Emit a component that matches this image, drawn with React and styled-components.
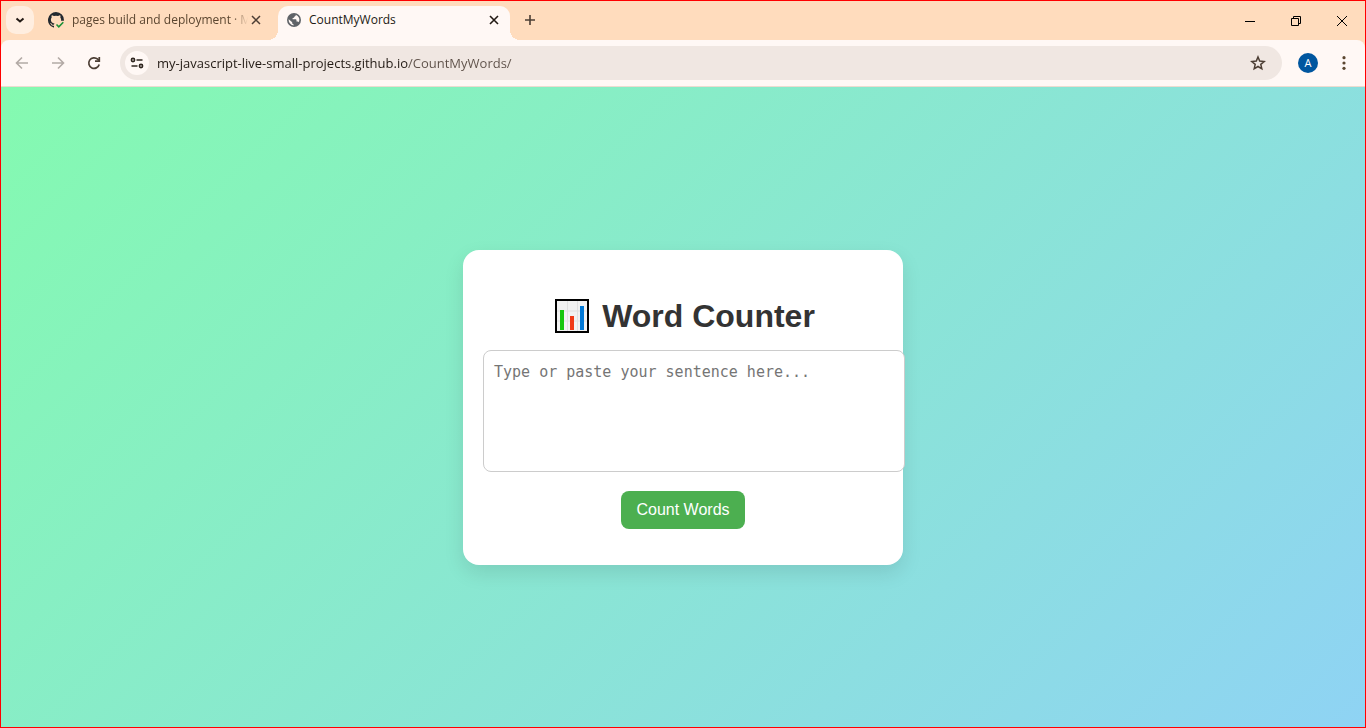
import React, { useState } from "react";
import styled, { createGlobalStyle } from "styled-components";

const GlobalStyle = createGlobalStyle`
  * { box-sizing: border-box; }
  body { margin: 0; font-family: "Open Sans", "Noto Sans", sans-serif; }
  button, input, textarea { font: inherit; margin: 0; }
  button { border: 0; padding: 0; background: none; }
  svg { display: block; flex: none; }
`;

const Window = styled.div`
  min-height: 100vh;
  display: flex;
  flex-direction: column;
  border: 1px solid #ff0000;
  background: #ffdcbd;
`;

const TabStrip = styled.header`
  height: 39px;
  display: flex;
  align-items: flex-end;
  padding-left: 5px;
`;

const TabSearch = styled.button`
  width: 28px;
  height: 28px;
  margin-bottom: 6px;
  border-radius: 10px;
  background: #ffeee0;
  display: grid;
  place-items: center;
`;

const Tab = styled.div`
  position: relative;
  width: ${(p) => (p.$active ? 232 : 244)}px;
  height: 34px;
  padding: ${(p) => (p.$active ? "0 8px 6px 9px" : "0 14px 6px")};
  display: flex;
  align-items: center;
  gap: 8px;
  font-size: 12px;
  line-height: 16px;
  color: ${(p) => (p.$active ? "#221a14" : "#5b4630")};
  background: ${(p) => (p.$active ? "#fff8f5" : "transparent")};
  border-radius: 10px 10px 0 0;

  &::before,
  &::after {
    content: "";
    display: ${(p) => (p.$active ? "block" : "none")};
    position: absolute;
    bottom: 0;
    width: 10px;
    height: 10px;
  }
  &::before {
    left: -10px;
    background: radial-gradient(circle at 0 0, transparent 10px, #fff8f5 10px);
  }
  &::after {
    right: -10px;
    background: radial-gradient(circle at 100% 0, transparent 10px, #fff8f5 10px);
  }
`;

const TabTitle = styled.span`
  flex: 1;
  min-width: 0;
  margin-right: ${(p) => (p.$fade ? "-8px" : "0")};
  overflow: hidden;
  white-space: nowrap;
  mask-image: ${(p) =>
    p.$fade ? "linear-gradient(to left, transparent, #000 16px)" : "none"};
`;

const IconButton = styled.button`
  width: ${(p) => p.$size || 16}px;
  height: ${(p) => p.$size || 16}px;
  display: grid;
  place-items: center;
  flex: none;
  border-radius: 50%;
`;

const NewTab = styled(IconButton)`
  margin: 0 0 6px 6px;
`;

const WindowControls = styled.div`
  margin-left: auto;
  align-self: stretch;
  display: flex;
`;

const WindowControl = styled.button`
  width: 46px;
  display: grid;
  place-items: center;
`;

const Toolbar = styled.nav`
  height: 47px;
  padding: 0 7px;
  display: flex;
  align-items: center;
  gap: 8px;
  background: #fff8f5;
  border-radius: 8px 8px 0 0;
  border-bottom: 1px solid #ecdcd0;
`;

const AddressBar = styled.div`
  flex: 1;
  height: 34px;
  margin-left: 4px;
  padding: 0 10px 0 5px;
  border-radius: 17px;
  background: #f0e7e2;
  display: flex;
  align-items: center;
  gap: 8px;
`;

const SiteInfo = styled(IconButton)`
  background: #fff8f5;
`;

const AddressInput = styled.input`
  flex: 1;
  min-width: 0;
  height: 24px;
  padding: 0;
  border: 0;
  outline: 0;
  font-size: 13px;
  color: transparent;
  caret-color: #221a14;
  background: linear-gradient(to right, #221a14 251px, #5d5048 251px);
  background-clip: text;
`;

const Avatar = styled.button`
  width: 20px;
  height: 20px;
  margin: 0 4px 0 8px;
  border-radius: 50%;
  background: #00569f;
  color: #fff;
  font-size: 11px;
  line-height: 20px;
  text-align: center;
`;

const Page = styled.main`
  flex: 1;
  display: flex;
  align-items: center;
  justify-content: center;
  background: linear-gradient(135deg, #84fab0, #8fd3f4);
  font-family: "Liberation Sans", Arial, sans-serif;
`;

const Card = styled.section`
  width: 440px;
  padding: 47px 20px 36px;
  border-radius: 16px;
  background: #fff;
  box-shadow: 0 8px 20px rgba(0, 0, 0, 0.1);
  display: flex;
  flex-direction: column;
  align-items: center;
`;

const Title = styled.h1`
  margin: 0 0 15px;
  padding-left: 4px;
  display: flex;
  align-items: center;
  gap: 13px;
  font-size: 32px;
  line-height: 38px;
  color: #333;
`;

const WordsInput = styled.textarea`
  align-self: flex-start;
  width: calc(100% + 22px);
  height: 122px;
  flex: none;
  padding: 10px;
  border: 1px solid #ccc;
  border-radius: 8px;
  resize: none;
  background: #fff;
  font-family: "DejaVu Sans Mono", monospace;
  font-size: 15px;
  line-height: 22px;

  &::placeholder {
    color: #757575;
  }
`;

const CountButton = styled.button`
  margin-top: 19px;
  padding: 10px 15px;
  border-radius: 8px;
  background: #4caf50;
  color: #fff;
  font-size: 16px;
  line-height: 18px;
`;

const Result = styled.output`
  margin-top: 12px;
  font-size: 18px;
  color: #333;

  &:empty {
    display: none;
  }
`;

const Stroke = ({ size = 16, color = "#4c3e34", width = 2, d }) => (
  <svg width={size} height={size} viewBox={`0 0 ${size} ${size}`} fill="none" stroke={color} strokeWidth={width} aria-hidden="true">
    <path d={d} />
  </svg>
);

const GithubIcon = () => (
  <svg width="16" height="16" viewBox="0 0 16 16" aria-hidden="true">
    <path
      fill="#24292f"
      d="M8 0a8 8 0 0 0-2.5 15.6c.4.1.5-.2.5-.4v-1.5c-2.2.5-2.7-.9-2.7-.9-.4-.9-.9-1.2-.9-1.2-.7-.5.1-.5.1-.5.8.1 1.2.8 1.2.8.7 1.300 1.900.9 2.300.7.1-.5.3-.9.5-1.100C4.700 11.300 2.900 10.600 2.900 7.600c0-.9.3-1.600.8-2.200-.1-.2-.4-1 .1-2.100 0 0 .7-.2 2.200.8a7.600 7.600 0 0 1 4 0c1.500-1 2.200-.8 2.200-.8.5 1.100.2 1.900.1 2.100.5.600.8 1.300.8 2.200l-.1 1.100h2.900A8 8 0 0 0 8 0Z"
    />
    <path d="m8.500 12.500 2.300 2.300 4.500-4.500" fill="none" stroke="#1a9137" strokeWidth="1.600" />
  </svg>
);

const GlobeIcon = () => (
  <svg width="14" height="14" viewBox="0 0 14 14" aria-hidden="true">
    <circle cx="7" cy="7" r="7" fill="#5f6368" />
    <path
      fill="#fff8f5"
      d="M8.700 1.700c.2 1-.2 1.500-1.100 1.700L6.900 4.700 5.600 5v1.200h2.700c.8 0 1.200.5 1.200 1.200v1.100h1.100c.5 0 .9.300 1.100.800A5.400 5.400 0 0 0 8.700 1.700ZM1.700 6.300A5.400 5.400 0 0 0 6.500 12.400v-1.200c-.8 0-1.300-.5-1.300-1.200V9.300Z"
    />
  </svg>
);

const ReloadIcon = () => (
  <svg width="16" height="16" viewBox="0 0 16 16" fill="none" stroke="#4c3e34" strokeWidth="1.7" aria-hidden="true">
    <path d="M13.200 9.500A5.300 5.300 0 1 1 11.700 4.200L13 5.500" />
    <path d="M13.300 2V6.200H9" />
  </svg>
);

const TuneIcon = () => (
  <svg width="14" height="14" viewBox="0 0 14 14" fill="none" stroke="#2f261f" strokeWidth="1.600" aria-hidden="true">
    <circle cx="3" cy="4" r="1.600" />
    <path d="M6.500 4H12.500M1.500 10H7.500" />
    <circle cx="11" cy="10" r="1.600" />
  </svg>
);

const StarIcon = () => (
  <svg width="16" height="16" viewBox="0 0 16 16" fill="none" stroke="#4c3e34" strokeWidth="1.500" aria-hidden="true">
    <path d="m8 2 1.700 4.100 4.500.4-3.400 2.900 1 4.400L8 11.500l-3.800 2.300 1-4.400L1.800 6.500l4.500-.4Z" />
  </svg>
);

const DotsIcon = () => (
  <svg width="4" height="14" viewBox="0 0 4 14" fill="#5b4630" aria-hidden="true">
    <circle cx="2" cy="1.700" r="1.600" />
    <circle cx="2" cy="7" r="1.600" />
    <circle cx="2" cy="12.300" r="1.600" />
  </svg>
);

const ChartIcon = () => (
  <svg width="34" height="34" viewBox="0 0 34 34" aria-hidden="true">
    <rect x="1" y="1" width="32" height="32" fill="#f2f2f2" stroke="#000" strokeWidth="2" />
    <path d="M2 12H32M2 22H32M12.500 2V32M22.500 2V32" stroke="#e0e0e0" />
    <path d="M5 11h4v20H5z" fill="#16c60c" />
    <path d="M15 17h4v14h-4z" fill="#f03a17" />
    <path d="M25 7h4v24h-4z" fill="#0078d7" />
  </svg>
);

export default function App() {
  const [address, setAddress] = useState("my-javascript-live-small-projects.github.io/CountMyWords/");
  const [text, setText] = useState("");
  const [result, setResult] = useState("");

  const countWords = () => {
    const total = text.trim().split(/\s+/).filter(Boolean).length;
    setResult(`Total words: ${total}`);
  };

  return (
    <Window>
      <GlobalStyle />
      <TabStrip>
        <TabSearch aria-label="Search tabs">
          <Stroke d="M4.500 6.500 8 9.500 11.500 6.500" color="#221a14" />
        </TabSearch>
        <Tab>
          <GithubIcon />
          <TabTitle $fade>pages build and deployment · M</TabTitle>
          <IconButton aria-label="Close pages build and deployment">
            <Stroke d="m4 4 8 8M12 4l-8 8" width={1.5} />
          </IconButton>
        </Tab>
        <Tab $active>
          <GlobeIcon />
          <TabTitle>CountMyWords</TabTitle>
          <IconButton aria-label="Close CountMyWords">
            <Stroke d="m4 4 8 8M12 4l-8 8" width={1.6} color="#221a14" />
          </IconButton>
        </Tab>
        <NewTab $size={28} aria-label="New tab">
          <Stroke d="M8 3v10M3 8h10" width={1.6} />
        </NewTab>
        <WindowControls>
          <WindowControl aria-label="Minimize">
            <Stroke size={10} d="M0 5.500h10" width={1} color="#000" />
          </WindowControl>
          <WindowControl aria-label="Restore">
            <Stroke size={10} d="M.5 2.500h7v7h-7zM2.500 2.500v-2h7v7h-2" width={1} color="#000" />
          </WindowControl>
          <WindowControl aria-label="Close window">
            <Stroke size={10} d="m0 0 10 10M10 0 0 10" width={1} color="#000" />
          </WindowControl>
        </WindowControls>
      </TabStrip>
      <Toolbar>
        <IconButton $size={28} aria-label="Back">
          <Stroke d="M14 8H3M8 2.500 2.500 8 8 13.500" width={1.6} color="#b3aaa5" />
        </IconButton>
        <IconButton $size={28} aria-label="Forward">
          <Stroke d="M2 8H13M8 2.500 13.500 8 8 13.500" width={1.6} color="#b3aaa5" />
        </IconButton>
        <IconButton $size={28} aria-label="Reload">
          <ReloadIcon />
        </IconButton>
        <AddressBar>
          <SiteInfo $size={24} aria-label="View site information">
            <TuneIcon />
          </SiteInfo>
          <AddressInput
            aria-label="Address"
            spellCheck={false}
            value={address}
            onChange={(e) => setAddress(e.target.value)}
          />
          <IconButton $size={28} aria-label="Bookmark this tab">
            <StarIcon />
          </IconButton>
        </AddressBar>
        <Avatar aria-label="Profile A">A</Avatar>
        <IconButton $size={28} aria-label="Browser menu">
          <DotsIcon />
        </IconButton>
      </Toolbar>
      <Page>
        <Card>
          <Title>
            <ChartIcon />
            Word Counter
          </Title>
          <WordsInput
            aria-label="Sentence"
            placeholder="Type or paste your sentence here..."
            value={text}
            onChange={(e) => setText(e.target.value)}
          />
          <CountButton onClick={countWords}>Count Words</CountButton>
          <Result>{result}</Result>
        </Card>
      </Page>
    </Window>
  );
}
